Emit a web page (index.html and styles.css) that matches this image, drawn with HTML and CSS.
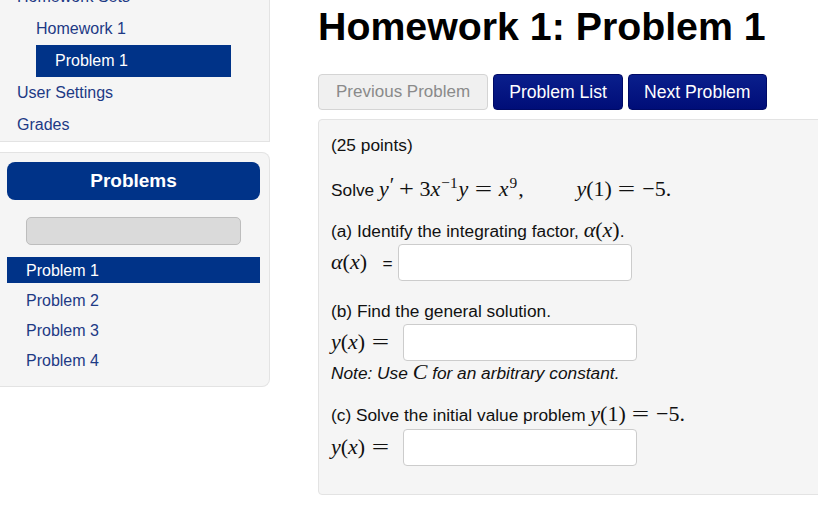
FILE: index.html
```html
<!DOCTYPE html>
<html lang="en">
<head>
<meta charset="utf-8">
<title>Homework 1: Problem 1</title>
<link rel="stylesheet" href="styles.css">
</head>
<body>
<div class="page">
  <aside class="sidebar">
    <nav class="nav-panel">
      <a class="nav-item level0" href="#">Homework Sets</a>
      <a class="nav-item level1" href="#">Homework 1</a>
      <a class="nav-item level2 active" href="#">Problem 1</a>
      <a class="nav-item level0" href="#">User Settings</a>
      <a class="nav-item level0" href="#">Grades</a>
    </nav>
    <div class="problems-panel">
      <div class="problems-head">Problems</div>
      <div class="progress"></div>
      <ul class="problem-list">
        <li class="problem-item current">Problem 1</li>
        <li class="problem-item">Problem 2</li>
        <li class="problem-item">Problem 3</li>
        <li class="problem-item">Problem 4</li>
      </ul>
    </div>
  </aside>
  <main class="main">
    <h1 class="title">Homework 1: Problem 1</h1>
    <div class="buttons">
      <span class="btn btn-disabled">Previous Problem</span>
      <span class="btn btn-primary">Problem List</span>
      <span class="btn btn-primary">Next Problem</span>
    </div>
    <div class="problem">
      <div class="line points">(25 points)</div>
      <div class="line solve">Solve <span class="math"><span class="mi">y</span><span class="prime">′</span><span class="mo bin">+</span><span class="mn">3</span><span class="mi">x</span><sup class="sup">−1</sup><span class="mi">y</span><span class="mo rel">=</span><span class="mi">x</span><sup class="sup">9</sup><span class="mn">,</span><span class="qquad"></span><span class="mi">y</span><span class="mn">(1)</span><span class="mo rel">=</span><span class="mn">−5.</span></span></div>
      <div class="line part-a">(a) Identify the integrating factor, <span class="math"><span class="mi">α</span><span class="mn">(</span><span class="mi">x</span><span class="mn">)</span></span>.</div>
      <div class="answer-row first">
        <span class="label"><span class="math"><span class="mi">α</span><span class="mn">(</span><span class="mi">x</span><span class="mn">)</span></span><span class="eq">=</span></span>
        <span class="answer a"></span>
      </div>
      <div class="line part-b">(b) Find the general solution.</div>
      <div class="answer-row">
        <span class="label"><span class="math"><span class="mi">y</span><span class="mn">(</span><span class="mi">x</span><span class="mn">)</span><span class="mo rel">=</span></span></span>
        <span class="answer"></span>
      </div>
      <div class="line note">Note: Use <span class="math"><span class="mi">C</span></span> for an arbitrary constant.</div>
      <div class="line part-c">(c) Solve the initial value problem <span class="math"><span class="mi">y</span><span class="mn">(1)</span><span class="mo rel">=</span><span class="mn">−5.</span></span></div>
      <div class="answer-row last">
        <span class="label"><span class="math"><span class="mi">y</span><span class="mn">(</span><span class="mi">x</span><span class="mn">)</span><span class="mo rel">=</span></span></span>
        <span class="answer"></span>
      </div>
    </div>
  </main>
</div>
</body>
</html>
```

FILE: styles.css
```css
html, body {
  margin: 0;
  padding: 0;
  background: #fff;
  overflow: hidden;
}
body {
  font-family: "Liberation Sans", Arial, sans-serif;
  color: #111;
}
.page {
  display: flex;
  gap: 48px;
  align-items: flex-start;
}
.sidebar {
  width: 270px;
  flex: none;
  margin-top: -19px;
}
.nav-panel {
  display: flex;
  flex-direction: column;
  background: #f5f5f5;
  border-right: 1px solid #e3e3e3;
  border-bottom: 1px solid #e3e3e3;
}
.nav-item {
  display: block;
  font-size: 16px;
  line-height: 32px;
  color: #1d3a85;
  text-decoration: none;
}
.level0 { padding-left: 17px; }
.level1 { padding-left: 36px; }
.level2 {
  margin-left: 36px;
  width: 176px;
  padding-left: 19px;
}
.nav-item.active {
  background: #003388;
  color: #fff;
}
.problems-panel {
  margin-top: 10px;
  background: #f5f5f5;
  border: 1px solid #e3e3e3;
  border-left: none;
  border-radius: 0 8px 8px 0;
  padding: 9px 9px 13px 7px;
}
.problems-head {
  height: 38px;
  line-height: 38px;
  background: #003388;
  color: #fff;
  border-radius: 8px;
  text-align: center;
  font-weight: bold;
  font-size: 19px;
}
.progress {
  margin: 17px 19px 0;
  height: 28px;
  box-sizing: border-box;
  background: #dadada;
  border: 1px solid #bdbdbd;
  border-radius: 5px;
}
.problem-list {
  list-style: none;
  margin: 12px 0 0;
  padding: 0;
}
.problem-item {
  height: 26px;
  line-height: 27px;
  padding-left: 19px;
  margin-bottom: 4px;
  font-size: 16px;
  color: #1d3a85;
}
.problem-item:last-child { margin-bottom: 0; }
.problem-item.current {
  background: #003388;
  color: #fff;
}
.main {
  flex: none;
  width: 560px;
}
.title {
  margin: 4px 0 26px;
  font-size: 39.3px;
  line-height: 44px;
  font-weight: bold;
  color: #000;
}
.buttons {
  display: flex;
  gap: 5px;
}
.btn {
  display: block;
  box-sizing: border-box;
  height: 36px;
  line-height: 34px;
  border-radius: 4px;
  border: 1px solid transparent;
  font-size: 17.6px;
  padding: 0 15px;
}
.btn-disabled {
  font-size: 17px;
  padding: 0 17px;
  background: #f0f0f0;
  border-color: #d4d4d4;
  color: #8a8a8a;
}
.btn-primary {
  background: linear-gradient(#0a1f8c, #000d78);
  border-color: #000a66;
  color: #fff;
}
.problem {
  margin-top: 9px;
  width: 540px;
  box-sizing: border-box;
  background: #f5f5f5;
  border: 1px solid #e3e3e3;
  border-radius: 4px;
  padding: 13px 12px 28px;
  font-size: 17.3px;
  color: #111;
}
.line {
  height: 24px;
  line-height: 24px;
  white-space: nowrap;
}
.solve { margin-top: 18px; }
.part-a { margin-top: 20px; }
.part-b, .part-c { margin-top: 18px; }
.note { font-style: italic; }
.answer-row {
  display: flex;
  align-items: center;
  margin-top: 1px;
  height: 37px;
}
.answer-row.last { margin-top: 2px; }
.label {
  white-space: nowrap;
  line-height: 24px;
}
.eq { margin-left: 0.9em; }
.answer {
  display: block;
  width: 234px;
  height: 37px;
  box-sizing: border-box;
  background: #fff;
  border: 1px solid #cccccc;
  border-radius: 4px;
  margin-left: 7px;
}
.answer.a { margin-left: 5px; }
.math {
  font-family: "Liberation Serif", "Times New Roman", serif;
  font-size: 22px;
  font-style: normal;
  line-height: 1;
}
.mi { font-style: italic; }
.mn { font-style: normal; }
.mo {
  display: inline-block;
  width: 0.78em;
  text-align: center;
}
.mo.bin { margin: 0 0.18em; transform: scaleX(1.2); }
.mo.rel { margin: 0 0.3em; transform: scaleX(1.4); }
.prime { font-size: 0.95em; vertical-align: 0.2em; margin-left: 1px; }
.sup {
  font-size: 0.7em;
  vertical-align: 0.55em;
  line-height: 0;
  margin-left: 1px;
  margin-right: 1px;
}
.qquad {
  display: inline-block;
  width: 2.4em;
}
```
